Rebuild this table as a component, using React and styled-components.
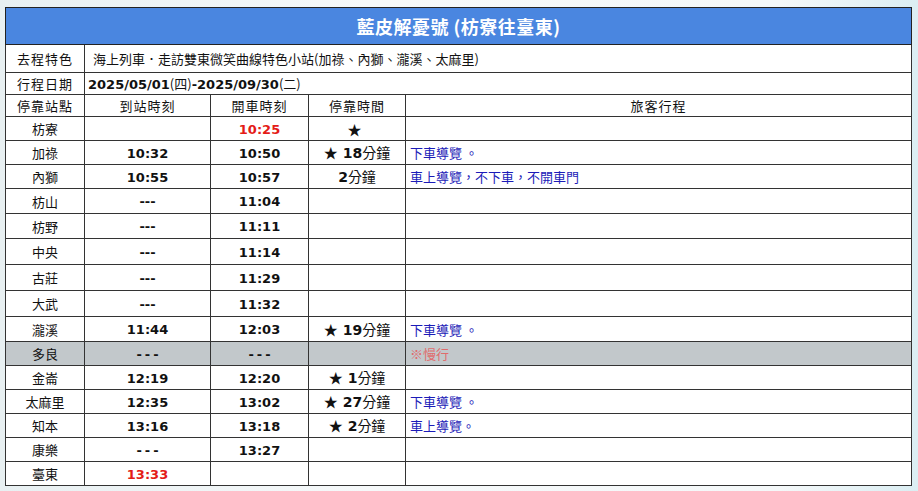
import React from "react";
import styled, { createGlobalStyle } from "styled-components";

const Global = createGlobalStyle`
  html, body { margin: 0; padding: 0; }
  body {
    background: linear-gradient(90deg, #e8f0f2 0%, #f6f9fa 40%, #f4f8f9 85%, #dbeef3 100%);
    font-family: "Noto Sans CJK TC", "Noto Sans", sans-serif;
    width: 918px; height: 491px; overflow: hidden;
  }
`;

const Page = styled.div`
  padding: 7px 6px 0 5px;
`;

const Table = styled.table`
  width: 907px;
  border-collapse: collapse;
  table-layout: fixed;
  background: #fff;
  border: 1.5px solid #222;
  color: #111;
  font-size: 13px;
`;

const TitleCell = styled.th`
  background: #4a86e0;
  color: #fff;
  font-size: 18px;
  font-weight: 700;
  height: 36px;
  padding: 0;
  border: 1px solid #222;
  letter-spacing: 0.5px;
`;

const Cell = styled.td`
  height: ${(p) => p.$h - 1}px;
  padding: 0 ${(p) => (p.$pad != null ? p.$pad : 0)}px;
  border: 1px solid #333;
  border-left-color: ${(p) => (p.$gray ? "#888" : "#333")};
  text-align: ${(p) => p.$align || "center"};
  vertical-align: middle;
  white-space: nowrap;
  overflow: hidden;
  line-height: 1;
  font-size: ${(p) => p.$fs || 13}px;
  background: ${(p) => (p.$shade ? "#c2c8cb" : "transparent")};
  letter-spacing: ${(p) => (p.$spaced ? "1px" : "0")};
`;

const Time = styled.span`
  font-family: "DejaVu Sans", sans-serif;
  font-weight: 700;
  font-size: 13px;
  color: ${(p) => (p.$red ? "#e41b17" : "#111")};
  letter-spacing: ${(p) => (p.$wide ? "3px" : "0")};
  margin-right: ${(p) => (p.$wide ? "-3px" : "0")};
`;

const Num = styled.span`
  font-family: "DejaVu Sans", sans-serif;
  font-weight: 700;
  font-size: ${(p) => p.$fs || 13}px;
`;

const Star = styled.span`
  margin-right: 5px;
`;

const Note = styled.span`
  color: ${(p) => (p.$warn ? "#e06b6b" : "#1b1bb8")};
  font-size: 13px;
`;

const cols = [79, 126, 98, 97];

const rows = [
  { s: "枋寮", a: "", d: "10:25", dRed: true, stop: "★", note: "", h: 24 },
  { s: "加祿", a: "10:32", d: "10:50", stop: "★ 18分鐘", note: "下車導覽 。", h: 24 },
  { s: "內獅", a: "10:55", d: "10:57", stop: "2分鐘", note: "車上導覽，不下車，不開車門", h: 24 },
  { s: "枋山", a: "---", d: "11:04", h: 25 },
  { s: "枋野", a: "---", d: "11:11", h: 25 },
  { s: "中央", a: "---", d: "11:14", h: 26 },
  { s: "古莊", a: "---", d: "11:29", h: 26 },
  { s: "大武", a: "---", d: "11:32", h: 26 },
  { s: "瀧溪", a: "11:44", d: "12:03", stop: "★ 19分鐘", note: "下車導覽 。", h: 25 },
  { s: "多良", a: "---", aWide: true, d: "---", dWide: true, stop: "", note: "※慢行", warn: true, shade: true, h: 24 },
  { s: "金崙", a: "12:19", d: "12:20", stop: "★ 1分鐘", h: 24 },
  { s: "太麻里", a: "12:35", d: "13:02", stop: "★ 27分鐘", note: "下車導覽 。", h: 24 },
  { s: "知本", a: "13:16", d: "13:18", stop: "★ 2分鐘", note: "車上導覽。", h: 24 },
  { s: "康樂", a: "---", aWide: true, d: "13:27", h: 24 },
  { s: "臺東", a: "13:33", aRed: true, d: "", h: 24 },
];

function Stop({ text }) {
  if (!text) return null;
  const m = text.match(/^(★ ?)?(\d*)(.*)$/);
  return (
    <>
      {m[1] ? <Star>★</Star> : null}
      {m[2] ? <Num $fs={14}>{m[2]}</Num> : null}
      {m[3]}
    </>
  );
}

function TimeText({ t, red, wide }) {
  if (!t) return null;
  return (
    <Time $red={red} $wide={wide}>
      {t}
    </Time>
  );
}

export default function App() {
  return (
    <Page>
      <Global />
      <Table>
        <colgroup>
          {cols.map((w, i) => (
            <col key={i} style={{ width: w }} />
          ))}
          <col />
        </colgroup>
        <tbody>
          <tr>
            <TitleCell colSpan={5}>藍皮解憂號 (枋寮往臺東)</TitleCell>
          </tr>
          <tr>
            <Cell $h={28} $spaced>去程特色</Cell>
            <Cell $h={28} colSpan={4} $align="left" $pad={8}>
              海上列車．走訪雙東微笑曲線特色小站(加祿、內獅、瀧溪、太麻里)
            </Cell>
          </tr>
          <tr>
            <Cell $h={22} $spaced>行程日期</Cell>
            <Cell $h={22} colSpan={4} $align="left" $pad={3}>
              <Num>2025/05/01</Num>(四)<Num>-2025/09/30</Num>(二)
            </Cell>
          </tr>
          <tr>
            <Cell $h={22} $spaced>停靠站點</Cell>
            <Cell $h={22} $spaced>到站時刻</Cell>
            <Cell $h={22} $spaced>開車時刻</Cell>
            <Cell $h={22} $spaced>停靠時間</Cell>
            <Cell $h={22} $gray $spaced>旅客行程</Cell>
          </tr>
          {rows.map((r) => (
            <tr key={r.s}>
              <Cell $h={r.h} $shade={r.shade}>{r.s}</Cell>
              <Cell $h={r.h} $shade={r.shade}>
                <TimeText t={r.a} red={r.aRed} wide={r.aWide} />
              </Cell>
              <Cell $h={r.h} $shade={r.shade}>
                <TimeText t={r.d} red={r.dRed} wide={r.dWide} />
              </Cell>
              <Cell $h={r.h} $shade={r.shade} $fs={14}>
                <Stop text={r.stop} />
              </Cell>
              <Cell $h={r.h} $shade={r.shade} $gray $align="left" $pad={4}>
                {r.note ? <Note $warn={r.warn}>{r.note}</Note> : null}
              </Cell>
            </tr>
          ))}
        </tbody>
      </Table>
    </Page>
  );
}
